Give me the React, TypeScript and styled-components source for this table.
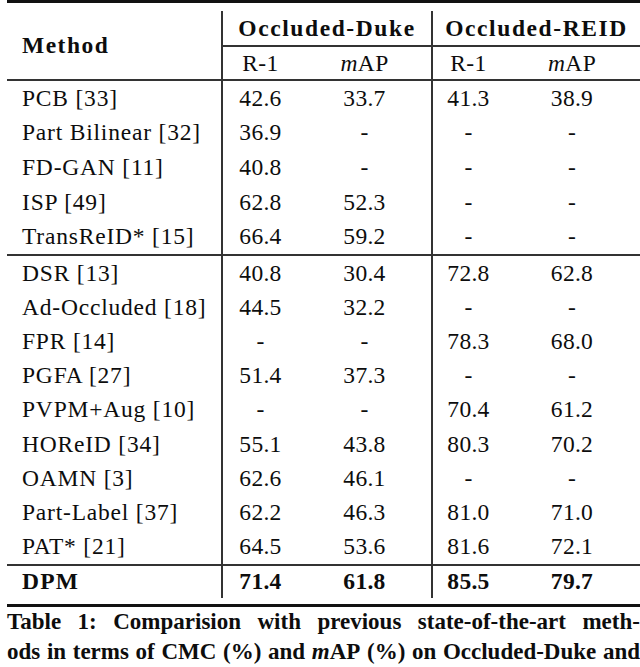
import React from 'react';
import styled, { createGlobalStyle } from 'styled-components';

const Global = createGlobalStyle`
  html, body { margin: 0; padding: 0; background: #fff; }
  body {
    width: 640px;
    height: 667px;
    overflow: hidden;
    font-family: "Liberation Serif", "Times New Roman", serif;
    color: #0d0d0d;
  }
`;

const COLS = '214px 77px 133px 73px 136px';
const LINE = '2px solid #333';

const Page = styled.div`
  padding-left: 7px;
  width: 633px;
`;

const ThickRule = styled.div`
  height: 3px;
  background: #111;
`;

const ThinRule = styled.div`
  height: 2px;
  background: #333;
`;

const Gap = styled.div<{ $h: number }>`
  height: ${(p) => p.$h}px;
`;

const Header = styled.div`
  display: grid;
  grid-template-columns: ${COLS};
  grid-template-rows: 36px 32px;
`;

const MethodHead = styled.div`
  grid-row: 1 / span 2;
  display: flex;
  align-items: center;
  padding-left: 15px;
  font-weight: 700;
  font-size: 23.5px;
  letter-spacing: 1.5px;
`;

const GroupHead = styled.div`
  grid-column: span 2;
  border-left: ${LINE};
  border-bottom: ${LINE};
  display: flex;
  align-items: center;
  justify-content: center;
  font-weight: 700;
  font-size: 23.5px;
  letter-spacing: 1.6px;
`;

const SubHead = styled.div<{ $div?: boolean }>`
  border-left: ${(p) => (p.$div ? LINE : 'none')};
  display: flex;
  align-items: center;
  justify-content: center;
  font-size: 23.5px;
  letter-spacing: 0.4px;
`;

const Row = styled.div<{ $h: number }>`
  display: grid;
  grid-template-columns: ${COLS};
  height: ${(p) => p.$h}px;
`;

const NameCell = styled.div<{ $bold?: boolean }>`
  display: flex;
  align-items: center;
  padding-left: 15px;
  font-size: 23.5px;
  white-space: nowrap;
  font-weight: ${(p) => (p.$bold ? 700 : 400)};
  letter-spacing: ${(p) => (p.$bold ? '1.2px' : '0.8px')};
`;

const NumCell = styled.div<{ $div?: boolean; $bold?: boolean }>`
  display: flex;
  align-items: center;
  justify-content: center;
  border-left: ${(p) => (p.$div ? LINE : 'none')};
  font-size: 23.5px;
  font-weight: ${(p) => (p.$bold ? 700 : 400)};
  letter-spacing: 0.3px;
`;

const Caption = styled.div`
  font-weight: 700;
  font-size: 23px;
`;

const CaptionLine = styled.div`
  display: flex;
  justify-content: space-between;
  align-items: center;
  height: 30px;
  white-space: nowrap;
`;

type Entry = { name: string; v: [string, string, string, string] };

const group1: Entry[] = [
  { name: 'PCB [33]', v: ['42.6', '33.7', '41.3', '38.9'] },
  { name: 'Part Bilinear [32]', v: ['36.9', '-', '-', '-'] },
  { name: 'FD-GAN [11]', v: ['40.8', '-', '-', '-'] },
  { name: 'ISP [49]', v: ['62.8', '52.3', '-', '-'] },
  { name: 'TransReID* [15]', v: ['66.4', '59.2', '-', '-'] },
];

const group2: Entry[] = [
  { name: 'DSR [13]', v: ['40.8', '30.4', '72.8', '62.8'] },
  { name: 'Ad-Occluded [18]', v: ['44.5', '32.2', '-', '-'] },
  { name: 'FPR [14]', v: ['-', '-', '78.3', '68.0'] },
  { name: 'PGFA [27]', v: ['51.4', '37.3', '-', '-'] },
  { name: 'PVPM+Aug [10]', v: ['-', '-', '70.4', '61.2'] },
  { name: 'HOReID [34]', v: ['55.1', '43.8', '80.3', '70.2'] },
  { name: 'OAMN [3]', v: ['62.6', '46.1', '-', '-'] },
  { name: 'Part-Label [37]', v: ['62.2', '46.3', '81.0', '71.0'] },
  { name: 'PAT* [21]', v: ['64.5', '53.6', '81.6', '72.1'] },
];

const DataRow = ({ e, h, bold }: { e: Entry; h: number; bold?: boolean }) => (
  <Row $h={h}>
    <NameCell $bold={bold}>{e.name}</NameCell>
    <NumCell $div $bold={bold}>{e.v[0]}</NumCell>
    <NumCell $bold={bold}>{e.v[1]}</NumCell>
    <NumCell $div $bold={bold}>{e.v[2]}</NumCell>
    <NumCell $bold={bold}>{e.v[3]}</NumCell>
  </Row>
);

const MAP = () => (
  <span>
    <i>m</i>AP
  </span>
);

export default function App() {
  const line1 = ['Table', '1:', 'Comparision', 'with', 'previous', 'state-of-the-art', 'meth-'];
  return (
    <>
      <Global />
      <Page>
        <ThickRule />
        <Gap $h={8} />
        <Header>
          <MethodHead>Method</MethodHead>
          <GroupHead>Occluded-Duke</GroupHead>
          <GroupHead>Occluded-REID</GroupHead>
          <SubHead $div>R-1</SubHead>
          <SubHead>
            <MAP />
          </SubHead>
          <SubHead $div>R-1</SubHead>
          <SubHead>
            <MAP />
          </SubHead>
        </Header>
        <ThinRule />
        {group1.map((e) => (
          <DataRow key={e.name} e={e} h={34.6} />
        ))}
        <ThinRule />
        {group2.map((e) => (
          <DataRow key={e.name} e={e} h={34.22} />
        ))}
        <ThinRule />
        <DataRow e={{ name: 'DPM', v: ['71.4', '61.8', '85.5', '79.7'] }} h={32} bold />
        <Gap $h={6} />
        <ThickRule />
        <Caption>
          <CaptionLine>
            {line1.map((w) => (
              <span key={w}>{w}</span>
            ))}
          </CaptionLine>
          <CaptionLine>
            <span>ods</span>
            <span>in</span>
            <span>terms</span>
            <span>of</span>
            <span>CMC</span>
            <span>(%)</span>
            <span>and</span>
            <MAP />
            <span>(%)</span>
            <span>on</span>
            <span>Occluded-Duke</span>
            <span>and</span>
          </CaptionLine>
        </Caption>
      </Page>
    </>
  );
}
